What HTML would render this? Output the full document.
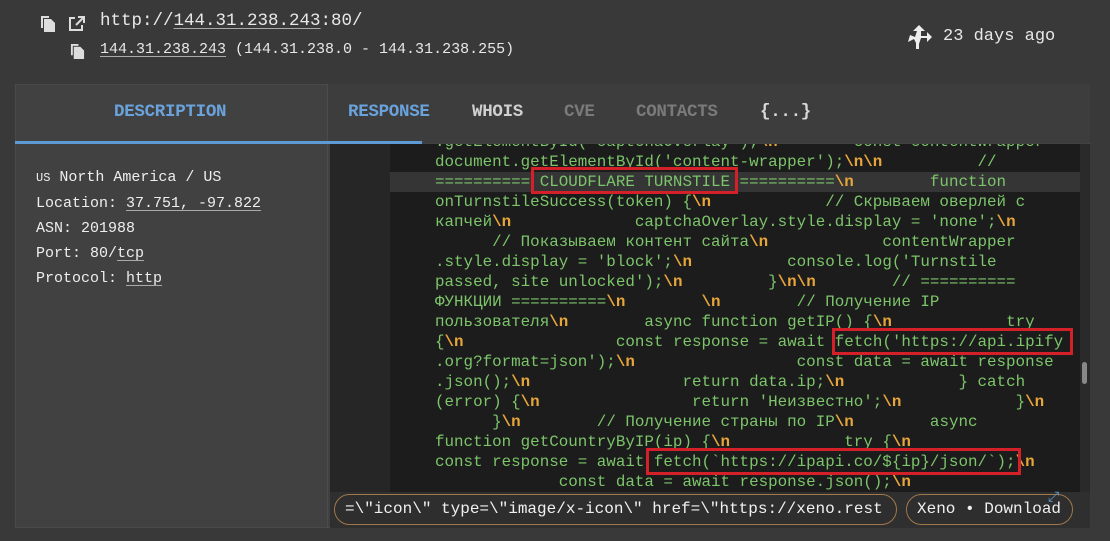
<!DOCTYPE html>
<html><head><meta charset="utf-8"><style>
*{margin:0;padding:0;box-sizing:border-box}
body{width:1110px;height:541px;background:#393939;position:relative;overflow:hidden;font-family:"Liberation Mono",monospace;color:#e8e8e8}
.a{position:absolute;white-space:pre}
.u{text-decoration:underline;text-decoration-color:#aaa;text-underline-offset:3px}
#panel{position:absolute;left:15px;top:84px;width:1075px;height:444px;background:#414141;border:1px solid #4a4a4a}
.tab{position:absolute;top:102px;font-size:17.5px;font-weight:bold;letter-spacing:-0.3px}
#code{position:absolute;left:330px;top:144px;width:750px;height:348px;background:#1c1c1c;overflow:hidden}
#gut{position:absolute;left:0;top:0;width:60px;height:100%;background:#262626}
#hl{position:absolute;left:60px;top:28px;width:690px;height:20px;background:#353535}
pre{position:absolute;left:105px;top:-12px;font-family:"Liberation Mono","DejaVu Sans Mono",monospace;font-size:15.87px;line-height:20px;color:#7cc56a}
pre b{color:#e8a63a}
.box{position:absolute;border:3px solid #d42028}
.pill{position:absolute;top:494px;height:31px;border:1.5px solid #a0784a;border-radius:16px;font-size:16px;line-height:28px;padding-left:10px;overflow:hidden;white-space:pre;color:#f0f0f0;background:#2e2e2e}
</style></head><body>
<svg class="a" style="left:40px;top:15px" width="16" height="17" viewBox="0 0 16 17"><path d="M1 1h8v2H3v10H1z" fill="#ddd"/><path d="M4 4h7l4 4v9H4z" fill="#ddd"/></svg>
<svg class="a" style="left:68px;top:16px" width="17" height="16" viewBox="0 0 17 16"><path d="M7 2H2v12h12V9" fill="none" stroke="#ddd" stroke-width="2"/><path d="M10 1h6v6M16 1 8 9" fill="none" stroke="#ddd" stroke-width="2"/></svg>
<div class="a" style="left:100px;top:11px;font-size:17.5px">http://<span class="u">144.31.238.243</span>:80/</div>
<svg class="a" style="left:70px;top:43px" width="15" height="16" viewBox="0 0 16 17"><path d="M1 1h8v2H3v10H1z" fill="#ddd"/><path d="M4 4h7l4 4v9H4z" fill="#ddd"/></svg>
<div class="a" style="left:100px;top:41px;font-size:15px"><span class="u">144.31.238.243</span> (144.31.238.0 - 144.31.238.255)</div>
<svg class="a" style="left:906px;top:24px" width="27" height="26" viewBox="0 0 27 26"><path d="M13 1 L19 7 L15 7 L15 12 L21 12 L21 8 L26 13 L21 18 L21 14 L15 14 L13 20 L13 25 L10 25 L10 19 L8 15 L2 18 L4 11 L9 13 L11 7 L7 7Z" fill="#eee"/></svg>
<div class="a" style="left:943px;top:27px;font-size:17px">23 days ago</div>
<div id="panel"></div>
<div class="a" style="left:328px;top:84px;width:762px;height:59px;background:#3d3d3d"></div>
<div class="a" style="left:327px;top:84px;width:1px;height:444px;background:#4c4c4c"></div>
<div class="a" style="left:15px;top:141px;width:407px;height:3px;background:#5e9bd6"></div>
<div class="tab" style="left:114px;color:#6aa3dc">DESCRIPTION</div>
<div class="tab" style="left:348px;color:#6aa3dc">RESPONSE</div>
<div class="tab" style="left:472px;color:#d0d0d0">WHOIS</div>
<div class="tab" style="left:564px;color:#7a7a7a">CVE</div>
<div class="tab" style="left:636px;color:#7a7a7a">CONTACTS</div>
<div class="tab" style="left:760px;color:#d8d8d8">{...}</div>
<div class="a" style="left:36px;top:165px;font-size:15px;line-height:25px;color:#eee"><span style="font-size:12px">US</span> North America / US
Location: <span class="u">37.751, -97.822</span>
ASN: 201988
Port: 80/<span class="u">tcp</span>
Protocol: <span class="u">http</span></div>
<div id="code"><div id="gut"></div><div id="hl"></div>
<pre>.getElementById('captchaOverlay');<b>\n</b>        const contentWrapper
document.getElementById('content-wrapper');<b>\n\n</b>          //
========== CLOUDFLARE TURNSTILE ==========<b>\n</b>        function
onTurnstileSuccess(token) {<b>\n</b>            // Скрываем оверлей с
капчей<b>\n</b>             captchaOverlay.style.display = 'none';<b>\n</b>
      // Показываем контент сайта<b>\n</b>            contentWrapper
.style.display = 'block';<b>\n</b>          console.log('Turnstile
passed, site unlocked');<b>\n</b>         }<b>\n\n</b>        // ==========
ФУНКЦИИ ==========<b>\n</b>        <b>\n</b>        // Получение IP
пользователя<b>\n</b>        async function getIP() {<b>\n</b>            try
{<b>\n</b>                const response = await fetch('https://api.ipify
.org?format=json');<b>\n</b>                 const data = await response
.json();<b>\n</b>                return data.ip;<b>\n</b>            } catch
(error) {<b>\n</b>                return 'Неизвестно';<b>\n</b>            }<b>\n</b>
      }<b>\n</b>        // Получение страны по IP<b>\n</b>        async
function getCountryByIP(ip) {<b>\n</b>            try {<b>\n</b>
const response = await fetch(`https://ipapi.co/${ip}/json/`);<b>\n</b>
             const data = await response.json();<b>\n</b>
            if (response.ok) {</pre>
</div>
<div class="a" style="left:1080px;top:144px;width:10px;height:348px;background:#2a2a2a"></div>
<div class="a" style="left:1082px;top:362px;width:5px;height:22px;background:#888;border-radius:3px"></div>
<div class="box" style="left:531px;top:167px;width:207px;height:27px"></div>
<div class="box" style="left:832px;top:328px;width:241px;height:27px"></div>
<div class="box" style="left:646px;top:448px;width:375px;height:27px"></div>
<div class="a" style="left:330px;top:492px;width:760px;height:36px;background:#2f2f2f"></div>
<div class="pill" style="left:334px;width:563px">=\"icon\" type=\"image/x-icon\" href=\"https://xeno.rest</div>
<div class="pill" style="left:906px;width:167px">Xeno • Download</div>
<div class="a" style="left:1048px;top:490px;font-size:14px;color:#5e9bd6">⤢</div>
</body></html>
